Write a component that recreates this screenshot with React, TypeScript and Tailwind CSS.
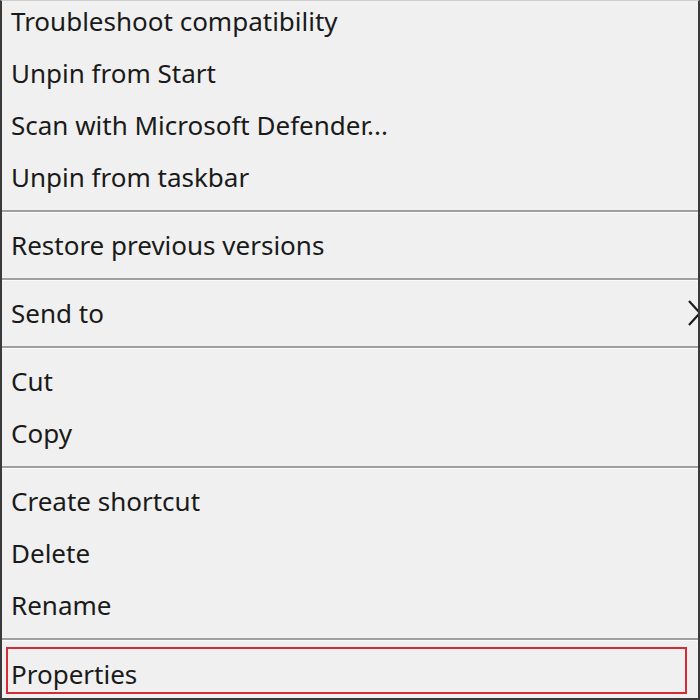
const groups = [
  ["Troubleshoot compatibility", "Unpin from Start", "Scan with Microsoft Defender...", "Unpin from taskbar"],
  ["Restore previous versions"],
  ["Send to"],
  ["Cut", "Copy"],
  ["Create shortcut", "Delete", "Rename"],
];

function MenuRow({ label }: { label: string }) {
  return (
    <div className="relative flex h-[52px] items-center pl-[9px]">
      <span>{label}</span>
      {label === "Send to" && (
        <svg className="absolute right-[-4px] top-[12px]" width="16" height="28" viewBox="0 0 16 28" fill="none">
          <path d="M3 2 L14 14 L3 26" stroke="#1b1b1b" strokeWidth="2.2" />
        </svg>
      )}
    </div>
  );
}

function Separator() {
  return (
    <div className="flex h-4 flex-col justify-center">
      <div className="h-[2px] bg-[#a0a0a0]" />
      <div className="h-px bg-[#fbfbfb]" />
    </div>
  );
}

export default function App() {
  return (
    <div
      className="h-[700px] w-[700px] overflow-hidden border-b-2 border-l-2 border-r-2 border-t border-b-[#3a3a3a] border-l-[#3a3a3a] border-r-[#3a3a3a] border-t-[#cfcfcf] bg-[#f0f0f0] text-[26px] text-[#1a1a1a]"
      style={{ fontFamily: '"Noto Sans", "Open Sans", sans-serif' }}
    >
      <div className="mt-[-6px]">
        {groups.map((group, i) => (
          <div key={i}>
            {group.map((label) => (
              <MenuRow key={label} label={label} />
            ))}
            <Separator />
          </div>
        ))}
        <div className="ml-[4px] mr-[11px] flex h-[47px] items-center border-2 border-[#d62a34] pl-[3px] pt-[8px]">
          <span>Properties</span>
        </div>
      </div>
    </div>
  );
}
